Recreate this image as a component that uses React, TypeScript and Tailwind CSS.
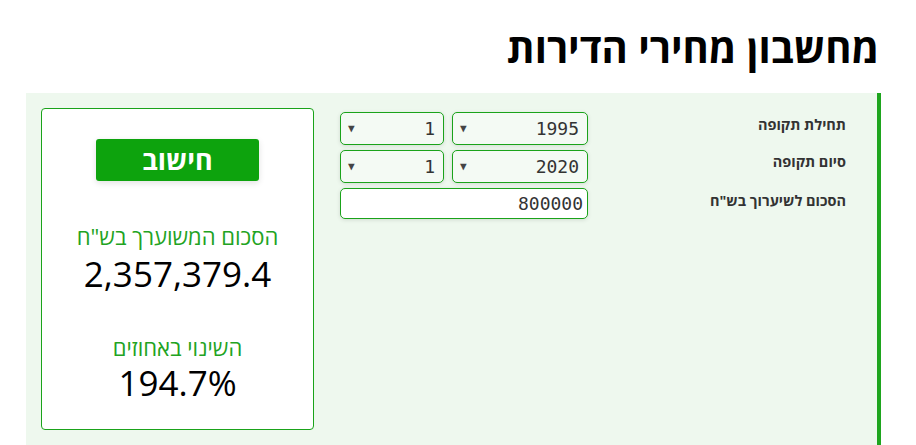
import React from "react";

const sans = { fontFamily: '"Open Sans", "Noto Sans", "DejaVu Sans", sans-serif' };

function SelectBox({ value, width }: { value: string; width: string }) {
  return (
    <div
      className={`${width} h-[33px] flex items-center justify-between rounded-[5px] border border-[#1aa31a] bg-[#f4faf4] shadow-[0_1px_4px_rgba(0,0,0,0.12)] pr-[8px] pl-[7px] text-[18px] text-[#333] font-['DejaVu_Sans_Mono',monospace]`}
    >
      <span>{value}</span>
      <span className="text-[11px] text-[#444] leading-none">▼</span>
    </div>
  );
}

export default function App() {
  return (
    <div className="w-[916px] bg-white" style={sans}>
      <div dir="rtl" className="ml-[26px] w-[855px]">
        <h1 className="pt-[20px] pb-[17px] pr-[2px] text-[40px] leading-[56px] font-bold text-black">
          מחשבון מחירי הדירות
        </h1>
        <div className="flex bg-[#eef8ee] border-r-4 border-[#1ea51e] pr-[31px] pl-[15px] pt-[15px] pb-[15px]">
          <div className="w-[258px] flex flex-col pt-[4px] text-[14.5px] font-bold text-[#333]">
            <div className="h-[33px] flex items-center pb-[8px]">תחילת תקופה</div>
            <div className="h-[33px] mt-[5px] flex items-center pb-[10px]">סיום תקופה</div>
            <div className="h-[31px] mt-[5px] flex items-center pb-[6px]">הסכום לשיערוך בש"ח</div>
          </div>
          <div className="w-[248px] flex flex-col gap-[5px] pt-[4px]">
            <div className="flex gap-[8px]">
              <SelectBox value="1995" width="w-[136px]" />
              <SelectBox value="1" width="w-[104px]" />
            </div>
            <div className="flex gap-[8px]">
              <SelectBox value="2020" width="w-[136px]" />
              <SelectBox value="1" width="w-[104px]" />
            </div>
            <div className="h-[31px] flex items-center rounded-[5px] border border-[#1aa31a] bg-white shadow-[0_1px_4px_rgba(0,0,0,0.12)] pr-[4px] text-[18px] text-[#333] font-['DejaVu_Sans_Mono',monospace]">
              800000
            </div>
          </div>
          <div className="w-[26px]" />
          <div className="w-[273px] h-[322px] bg-white border border-[#1aa31a] rounded-[4px] flex flex-col items-center pt-[30px]">
            <div className="w-[163px] h-[42px] rounded-[3px] bg-[#0da30d] shadow-[0_2px_6px_rgba(0,0,0,0.12)] flex items-center justify-center text-white text-[27px] leading-none font-bold pb-[2px]">
              חישוב
            </div>
            <div className="mt-[41px] text-[22px] leading-[28px] text-[#22a322]">הסכום המשוערך בש"ח</div>
            <div className="mt-[4px] text-[35px] leading-[40px] text-black" dir="ltr">2,357,379.4</div>
            <div className="mt-[39px] text-[22px] leading-[28px] text-[#22a322]">השינוי באחוזים</div>
            <div className="mt-[2px] text-[35px] leading-[40px] text-black" dir="ltr">194.7%</div>
          </div>
        </div>
      </div>
    </div>
  );
}
